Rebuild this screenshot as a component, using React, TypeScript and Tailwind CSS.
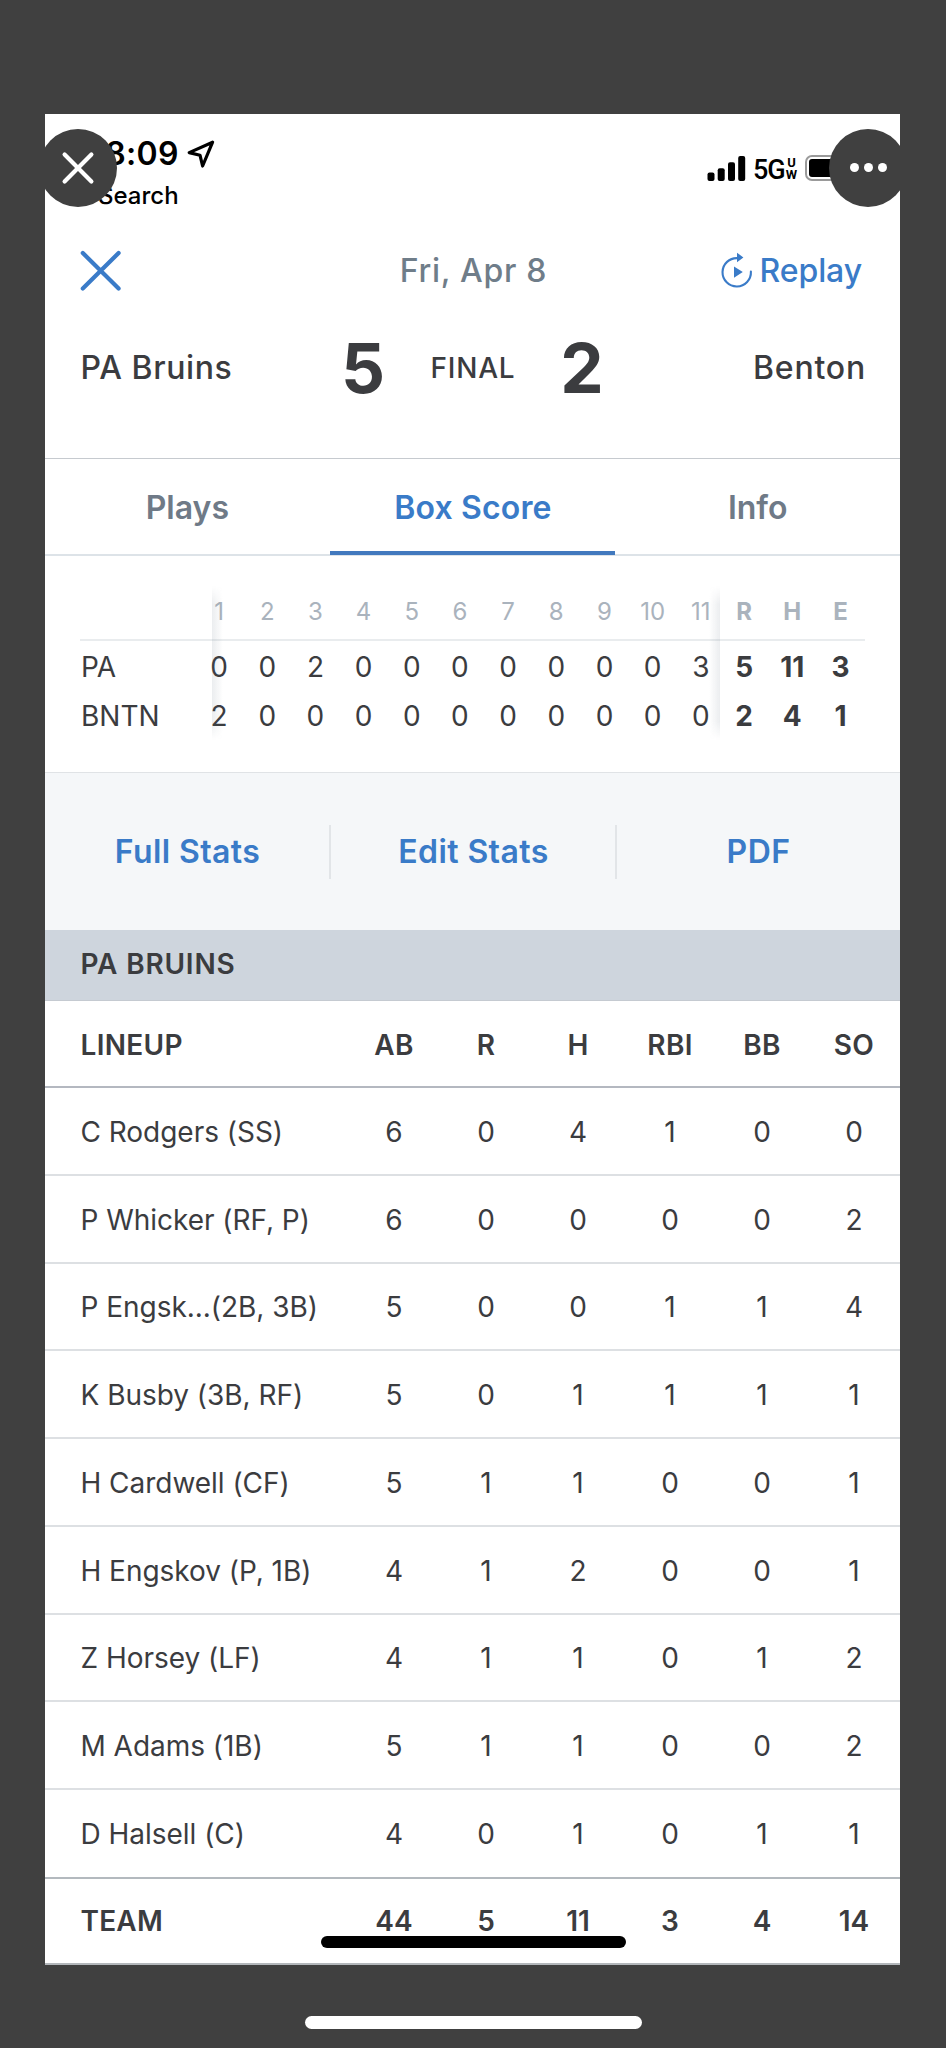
import React from "react";
import clsx from "clsx";

interface Batter {
  name: string;
  stats: number[];
}

const innings = {
  header: ["1", "2", "3", "4", "5", "6", "7", "8", "9", "10", "11"],
  away: [0, 0, 2, 0, 0, 0, 0, 0, 0, 0, 3],
  home: [2, 0, 0, 0, 0, 0, 0, 0, 0, 0, 0],
};

const columns = ["AB", "R", "H", "RBI", "BB", "SO"];

const lineup: Batter[] = [
  { name: "C Rodgers (SS)", stats: [6, 0, 4, 1, 0, 0] },
  { name: "P Whicker (RF, P)", stats: [6, 0, 0, 0, 0, 2] },
  { name: "P Engsk...(2B, 3B)", stats: [5, 0, 0, 1, 1, 4] },
  { name: "K Busby (3B, RF)", stats: [5, 0, 1, 1, 1, 1] },
  { name: "H Cardwell (CF)", stats: [5, 1, 1, 0, 0, 1] },
  { name: "H Engskov (P, 1B)", stats: [4, 1, 2, 0, 0, 1] },
  { name: "Z Horsey (LF)", stats: [4, 1, 1, 0, 1, 2] },
  { name: "M Adams (1B)", stats: [5, 1, 1, 0, 0, 2] },
  { name: "D Halsell (C)", stats: [4, 0, 1, 0, 1, 1] },
];

const teamTotals = [44, 5, 11, 3, 4, 14];

function StatusBar() {
  return (
    <div className="flex h-[116px] justify-between text-black">
      <div className="pl-[52px] pt-5">
        <div className="flex h-[40px] items-center">
          <span className="w-[82px] text-right text-[32px] font-semibold tracking-[0.4px]">8:09</span>
          <svg className="ml-[7px] h-[30px] w-[30px]" viewBox="0 0 30 30" fill="none">
            <path
              d="M26.6 3.2 L3.2 13.6 L14 16.2 L16.6 27 Z"
              stroke="black"
              strokeWidth="3.2"
              strokeLinejoin="round"
            />
          </svg>
        </div>
        <div className="mt-[6px] h-[32px] pl-px text-2xl font-medium leading-[32px]">Search</div>
      </div>

      <div className="flex items-start pr-[52px] pt-[41px]">
        <svg className="mt-px h-[26px] w-[39px]" viewBox="0 0 39 26">
          <rect x="0.5" y="16.5" width="7" height="8.5" rx="2" />
          <rect x="10.7" y="12.3" width="7" height="12.7" rx="2" />
          <rect x="21" y="6.3" width="7" height="18.7" rx="2" />
          <rect x="31.2" y="0" width="7" height="25" rx="2" />
        </svg>
        <span className="ml-[7px] mt-[2px] w-[33px] font-[Roboto] text-[27px] font-medium leading-[26px] tracking-[-1px]">
          5G
        </span>
        <span className="flex w-[11px] flex-col items-center pt-[2px] font-[Roboto] text-[13px] font-bold leading-[12px]">
          <span>U</span>
          <span>W</span>
        </span>
        <span className="ml-[8px] h-[26px] w-[43px] rounded-[7px] border-2 border-[#9a9a9a] p-[2px]">
          <span className="block h-full w-full rounded-[3px] bg-black" />
        </span>
      </div>
    </div>
  );
}

function NavBar() {
  return (
    <div className="flex h-[81px] items-center pl-[33px] pr-[38px] text-[32px] text-[#3a7bc8]">
      <div className="w-[240px]">
        <svg className="h-[44px] w-[44px]" viewBox="0 0 44 44" stroke="currentColor" strokeWidth="4.2" strokeLinecap="round">
          <path d="M4.8 4 L40.6 39.6 M40.6 4 L4.8 39.6" />
        </svg>
      </div>
      <div className="w-[311px] text-center font-medium tracking-[0.7px] text-[#6f7d89]">Fri, Apr 8</div>
      <div className="flex flex-1 items-center justify-end gap-[7px]">
        <svg className="h-[38px] w-[32px]" viewBox="0 0 32 38" fill="none">
          <path d="M16.5 6.1 A14.2 14.2 0 1 0 29.9 19.5" stroke="currentColor" strokeWidth="2.1" strokeLinecap="round" />
          <path d="M16 0.7 L22.4 5.4 L16 10.2 Z M13 14.4 L21.8 20 L13 25.8 Z" fill="currentColor" />
        </svg>
        <span className="font-medium tracking-[-0.1px]">Replay</span>
      </div>
    </div>
  );
}

function ScoreHeader() {
  return (
    <div className="h-[148px] border-b border-[#c6cacf]">
      <div className="flex h-[114px] items-center text-[32px]">
        <div className="w-[253px] pl-[35.5px] font-medium tracking-[0.6px]">PA Bruins</div>
        <div className="w-[130px] pt-0.5 text-center text-[69px] font-bold">5</div>
        <div className="w-[90px] text-center text-[28px] font-medium tracking-[0.8px]">FINAL</div>
        <div className="w-[128px] pt-0.5 text-center text-[69px] font-bold">2</div>
        <div className="flex-1 pr-[34px] text-right font-medium tracking-[0.8px]">Benton</div>
      </div>
    </div>
  );
}

function Tabs() {
  return (
    <div className="flex h-[97px] border-b-2 border-[#dde3e8] text-[32px] font-semibold text-[#6f7a87]">
      <div className="flex h-[96px] flex-1 items-center justify-center pt-px">Plays</div>
      <div className="flex h-[96px] flex-1 items-center justify-center border-b-4 border-[#4279be] pl-px pt-[5px] tracking-[0.15px] text-[#3a7bc8]">
        Box Score
      </div>
      <div className="flex h-[96px] flex-1 items-center justify-center pt-px">Info</div>
    </div>
  );
}

interface LineScoreRowProps {
  label: string;
  cells: (string | number)[];
  totals: (string | number)[];
}

function LineScoreRow({ label, cells, totals }: LineScoreRowProps) {
  return (
    <div className="flex h-full items-center">
      <div className="w-[131px] pl-px">{label}</div>
      <div className="w-[509px] overflow-hidden">
        <div className="-ml-[16px] flex w-[530px]">
          {cells.map((cell, i) => (
            <span key={i} className="w-[48.18px] shrink-0 text-center">
              {cell}
            </span>
          ))}
        </div>
      </div>
      <div className="flex font-bold">
        {totals.map((total, i) => (
          <span key={i} className="w-[48.2px] text-center">
            {total}
          </span>
        ))}
      </div>
    </div>
  );
}

function LineScore() {
  return (
    <div className="h-[216px] px-[35px] pt-[28px] text-[28px]">
      <div className="relative">
        <div className="mb-px h-[57px] border-b-2 border-[#e9ecee] text-2xl text-[#aab3bd]">
          <LineScoreRow label="" cells={innings.header} totals={["R", "H", "E"]} />
        </div>
        <div className="h-[49px]">
          <LineScoreRow label="PA" cells={innings.away} totals={[5, 11, 3]} />
        </div>
        <div className="h-[49px]">
          <LineScoreRow label="BNTN" cells={innings.home} totals={[2, 4, 1]} />
        </div>

        {/* Scroll edge shadows */}
        <div className="absolute left-[132px] top-[2px] h-[154px] w-[11px] bg-gradient-to-r from-[#5a6b7c]/12 to-transparent [mask-image:linear-gradient(transparent,black_12%,black_88%,transparent)]" />
        <div className="absolute left-[629px] top-[2px] h-[154px] w-[11px] bg-gradient-to-l from-[#5a6b7c]/12 to-transparent [mask-image:linear-gradient(transparent,black_12%,black_88%,transparent)]" />
      </div>
    </div>
  );
}

function StatActions() {
  return (
    <div className="flex h-[158px] items-center border-t border-[#e0e3e6] bg-[#f5f7f9] text-[32px] font-semibold text-[#3a7bc8]">
      <div className="flex-1 pl-px text-center tracking-[0.4px]">Full Stats</div>
      <div className="flex h-[54px] flex-1 items-center justify-center border-x-2 border-[#e2e5e8] pl-px tracking-[0.4px]">
        Edit Stats
      </div>
      <div className="flex-1 text-center tracking-[0.4px]">PDF</div>
    </div>
  );
}

function StatCells({ values }: { values: (string | number)[] }) {
  return (
    <>
      {values.map((value, i) => (
        <div key={i} className="w-[92px] text-center">
          {value}
        </div>
      ))}
    </>
  );
}

function LineupTable() {
  return (
    <div className="text-[28px]">
      <div className="flex h-[71px] items-center border-b border-[#c5cad1] bg-[#ced5dd] pb-[3px] pl-[35.5px] font-semibold tracking-[0.8px]">
        PA BRUINS
      </div>
      <div className="flex h-[87px] items-center border-b-2 border-[#b4b8c0] pt-[2px] font-semibold tracking-[0.3px]">
        <div className="w-[303px] pl-[35.5px]">LINEUP</div>
        <StatCells values={columns} />
      </div>
      {lineup.map((batter, i) => (
        <div
          key={batter.name}
          className={clsx(
            "flex items-center border-b-2",
            i === lineup.length - 1 ? "h-[89px] border-[#b3b9be] pt-px" : "h-[87.75px] border-[#dde0e3] pt-[2px]"
          )}
        >
          <div className="w-[303px] whitespace-nowrap pl-[35.5px] tracking-[-0.03px]">{batter.name}</div>
          <StatCells values={batter.stats} />
        </div>
      ))}
      <div className="flex h-[86px] items-center border-b-2 border-[#b3b7bb] font-semibold">
        <div className="w-[303px] pl-[35.5px] tracking-[0.2px]">TEAM</div>
        <StatCells values={teamTotals} />
      </div>
    </div>
  );
}

export default function App() {
  return (
    <div className="relative h-[2048px] w-[946px] overflow-hidden bg-[#404040] pl-[45px] pt-[114px] font-['Inter','Liberation_Sans',sans-serif]">
      <div className="h-[1851px] w-[855px] overflow-hidden bg-white text-[#3b3c3f]">
        <StatusBar />
        <NavBar />
        <ScoreHeader />
        <Tabs />
        <LineScore />
        <StatActions />
        <LineupTable />
      </div>

      {/* Home indicators, one for the shared shot and one for the viewer */}
      <div className="absolute left-[321px] top-[1936px] h-[12px] w-[305px] rounded-full bg-black" />
      <div className="absolute left-[305px] top-[2016px] h-[13px] w-[337px] rounded-full bg-white" />

      {/* Viewer controls floating over the shot */}
      <button type="button" className="absolute left-[39px] top-[128.5px] flex h-[78px] w-[78px] items-center justify-center rounded-full bg-[#404040]">
        <svg className="h-[34px] w-[34px]" viewBox="0 0 34 34" stroke="white" strokeWidth="4.2" strokeLinecap="round">
          <path d="M3.6 3.6 L30.4 30.4 M30.4 3.6 L3.6 30.4" />
        </svg>
      </button>
      <button type="button" className="absolute left-[829px] top-[128.5px] flex h-[78px] w-[78px] items-center justify-center gap-[5px] rounded-full bg-[#404040]">
        <span className="h-[9px] w-[9px] rounded-full bg-white" />
        <span className="h-[9px] w-[9px] rounded-full bg-white" />
        <span className="h-[9px] w-[9px] rounded-full bg-white" />
      </button>
    </div>
  );
}
